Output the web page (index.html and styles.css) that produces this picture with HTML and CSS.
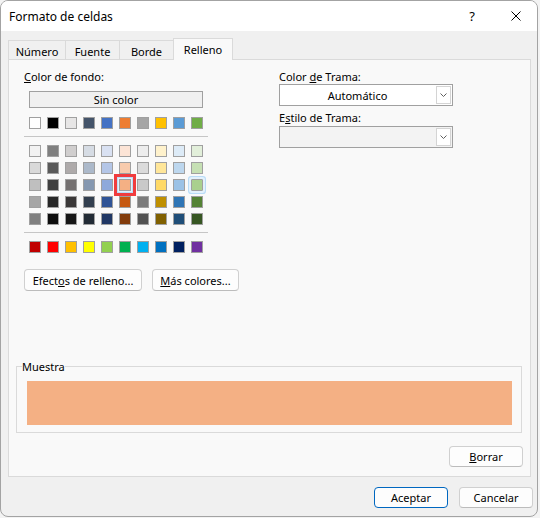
FILE: index.html
```html
<!DOCTYPE html>
<html lang="es">
<head>
    <meta charset="UTF-8">
    <title>Formato de celdas</title>
    <link rel="stylesheet" href="styles.css">
</head>
<body>
    <div class="window">
        <!-- Barra de título -->
        <div class="titlebar">
            <span class="title">Formato de celdas</span>
            <span class="help">?</span>
            <svg class="close" width="10" height="10" viewBox="0 0 10 10">
                <path d="M0.5 0.5 L9.5 9.5 M9.5 0.5 L0.5 9.5" stroke="#000" stroke-width="1"/>
            </svg>
        </div>

        <!-- Pestañas -->
        <div class="tabs">
            <div class="tab tab-numero">Número</div>
            <div class="tab tab-fuente">Fuente</div>
            <div class="tab tab-borde">Borde</div>
            <div class="tab tab-relleno active">Relleno</div>
        </div>

        <div class="panel">
            <div class="fill-top">
                <!-- Color de fondo -->
                <div class="bg-col">
                    <div class="label"><u>C</u>olor de fondo:</div>
                    <button class="no-color">Sin color</button>

                    <div class="swatches theme-row">
                        <span class="swatch" style="background:#FFFFFF"></span>
                        <span class="swatch" style="background:#000000"></span>
                        <span class="swatch" style="background:#E7E6E6"></span>
                        <span class="swatch" style="background:#44546A"></span>
                        <span class="swatch" style="background:#4472C4"></span>
                        <span class="swatch" style="background:#ED7D31"></span>
                        <span class="swatch" style="background:#A5A5A5"></span>
                        <span class="swatch" style="background:#FFC000"></span>
                        <span class="swatch" style="background:#5B9BD5"></span>
                        <span class="swatch" style="background:#70AD47"></span>
                    </div>

                    <div class="separator"></div>

                    <div class="swatches tints">
                        <span class="swatch" style="background:#F2F2F2"></span>
                        <span class="swatch" style="background:#7F7F7F"></span>
                        <span class="swatch" style="background:#D0CECE"></span>
                        <span class="swatch" style="background:#D6DCE4"></span>
                        <span class="swatch" style="background:#D9E1F2"></span>
                        <span class="swatch" style="background:#FCE4D6"></span>
                        <span class="swatch" style="background:#EDEDED"></span>
                        <span class="swatch" style="background:#FFF2CC"></span>
                        <span class="swatch" style="background:#DDEBF7"></span>
                        <span class="swatch" style="background:#E2EFDA"></span>

                        <span class="swatch" style="background:#D9D9D9"></span>
                        <span class="swatch" style="background:#595959"></span>
                        <span class="swatch" style="background:#AEAAAA"></span>
                        <span class="swatch" style="background:#ACB9CA"></span>
                        <span class="swatch" style="background:#B4C6E7"></span>
                        <span class="swatch" style="background:#F8CBAD"></span>
                        <span class="swatch" style="background:#DBDBDB"></span>
                        <span class="swatch" style="background:#FFE699"></span>
                        <span class="swatch" style="background:#BDD7EE"></span>
                        <span class="swatch" style="background:#C6E0B4"></span>

                        <span class="swatch" style="background:#BFBFBF"></span>
                        <span class="swatch" style="background:#404040"></span>
                        <span class="swatch" style="background:#757171"></span>
                        <span class="swatch" style="background:#8497B0"></span>
                        <span class="swatch" style="background:#8EA9DB"></span>
                        <span class="swatch selected" style="background:#F4B084"></span>
                        <span class="swatch" style="background:#C9C9C9"></span>
                        <span class="swatch" style="background:#FFD966"></span>
                        <span class="swatch" style="background:#9BC2E6"></span>
                        <span class="swatch hover" style="background:#A9D08E"></span>

                        <span class="swatch" style="background:#A6A6A6"></span>
                        <span class="swatch" style="background:#262626"></span>
                        <span class="swatch" style="background:#3A3838"></span>
                        <span class="swatch" style="background:#333F4F"></span>
                        <span class="swatch" style="background:#305496"></span>
                        <span class="swatch" style="background:#C65911"></span>
                        <span class="swatch" style="background:#7B7B7B"></span>
                        <span class="swatch" style="background:#BF8F00"></span>
                        <span class="swatch" style="background:#2F75B5"></span>
                        <span class="swatch" style="background:#548235"></span>

                        <span class="swatch" style="background:#808080"></span>
                        <span class="swatch" style="background:#0D0D0D"></span>
                        <span class="swatch" style="background:#161616"></span>
                        <span class="swatch" style="background:#222B35"></span>
                        <span class="swatch" style="background:#203764"></span>
                        <span class="swatch" style="background:#833C0C"></span>
                        <span class="swatch" style="background:#525252"></span>
                        <span class="swatch" style="background:#806000"></span>
                        <span class="swatch" style="background:#1F4E78"></span>
                        <span class="swatch" style="background:#375623"></span>
                    </div>

                    <div class="separator"></div>

                    <div class="swatches standard-row">
                        <span class="swatch" style="background:#C00000"></span>
                        <span class="swatch" style="background:#FF0000"></span>
                        <span class="swatch" style="background:#FFC000"></span>
                        <span class="swatch" style="background:#FFFF00"></span>
                        <span class="swatch" style="background:#92D050"></span>
                        <span class="swatch" style="background:#00B050"></span>
                        <span class="swatch" style="background:#00B0F0"></span>
                        <span class="swatch" style="background:#0070C0"></span>
                        <span class="swatch" style="background:#002060"></span>
                        <span class="swatch" style="background:#7030A0"></span>
                    </div>

                    <div class="effect-buttons">
                        <button class="btn btn-effects">Efect<u>o</u>s de relleno...</button>
                        <button class="btn btn-more">
                            <span><u>M</u>ás colores...</span>
                        </button>
                    </div>
                </div>

                <!-- Trama -->
                <div class="pattern-col">
                    <div class="label">Color <u>d</u>e Trama:</div>
                    <div class="combo">
                        <span class="combo-value">Automático</span>
                        <span class="combo-btn">
                            <svg width="7" height="4" viewBox="0 0 7 4">
                                <path d="M0.5 0.5 L3.5 3.5 L6.5 0.5" fill="none" stroke="#5f5f5f" stroke-width="1"/>
                            </svg>
                        </span>
                    </div>
                    <div class="label label-style">E<u>s</u>tilo de Trama:</div>
                    <div class="combo combo-empty">
                        <span class="combo-value"></span>
                        <span class="combo-btn">
                            <svg width="7" height="4" viewBox="0 0 7 4">
                                <path d="M0.5 0.5 L3.5 3.5 L6.5 0.5" fill="none" stroke="#5f5f5f" stroke-width="1"/>
                            </svg>
                        </span>
                    </div>
                </div>
            </div>

            <!-- Muestra -->
            <fieldset class="sample-group">
                <legend>Muestra</legend>
                <div class="sample"></div>
            </fieldset>

            <button class="btn btn-clear"><span><u>B</u>orrar</span></button>
        </div>

        <div class="footer">
            <button class="btn btn-ok">Aceptar</button>
            <button class="btn btn-cancel">Cancelar</button>
        </div>
    </div>
</body>
</html>
```

FILE: styles.css
```css
body {
    margin: 0;
    background-color: #f3f3f3;
    font-family: "Noto Sans", "Open Sans", sans-serif;
    font-size: 11px;
    color: #000;
}

.window {
    width: 538px;
    height: 517px;
    box-sizing: border-box;
    border: 1px solid #a3a3a3;
    border-radius: 8px;
    overflow: hidden;
    background-color: #f0f0f0;
    display: flex;
    flex-direction: column;
}

/* Barra de título */
.titlebar {
    height: 30px;
    flex-shrink: 0;
    background-color: #fff;
    display: flex;
    align-items: center;
    padding-left: 8px;
}

.title {
    flex: 1;
    font-size: 12px;
}

.help {
    width: 12px;
    text-align: center;
    font-size: 13px;
    margin-right: 33px;
}

.close {
    margin-right: 16px;
}

/* Pestañas */
.tabs {
    display: flex;
    align-items: flex-end;
    height: 21px;
    margin: 7px 0 0 7px;
    position: relative;
    z-index: 1;
}

.tab {
    height: 19px;
    box-sizing: border-box;
    border: 1px solid #dadada;
    border-bottom: none;
    margin-right: -1px;
    padding-top: 2px;
    display: flex;
    align-items: center;
    justify-content: center;
    background-color: #f0f0f0;
}

.tab-numero { width: 58px; }
.tab-fuente { width: 55px; }
.tab-borde { width: 55px; }
.tab-relleno { width: 60px; }

.tab.active {
    height: 22px;
    margin-bottom: -1px;
    padding-top: 0;
    background-color: #f9f9f9;
}

/* Panel de la pestaña */
.panel {
    height: 418px;
    box-sizing: border-box;
    margin: 0 6px 0 7px;
    border: 1px solid #dadada;
    background-color: #f9f9f9;
    padding: 9px 7px 0 15px;
    display: flex;
    flex-direction: column;
}

.fill-top {
    display: flex;
}

.bg-col {
    width: 255px;
}

.pattern-col {
    width: 174px;
}

.label {
    line-height: 15px;
}

.label-style {
    margin-top: 4px;
}

.no-color {
    display: block;
    width: 174px;
    height: 17px;
    margin: 7px 0 0 5px;
    padding: 0;
    box-sizing: border-box;
    border: 1px solid #a0a0a0;
    background-color: #f0f0f0;
    font: inherit;
    line-height: 15px;
    color: #000;
}

/* Paleta de colores */
.swatches {
    display: grid;
    grid-template-columns: repeat(10, 12px);
    column-gap: 6px;
    row-gap: 5px;
    margin-left: 5px;
}

.theme-row {
    margin-top: 9px;
}

.tints {
    margin-top: 8px;
}

.standard-row {
    margin-top: 8px;
}

.swatch {
    width: 12px;
    height: 12px;
    box-sizing: border-box;
    border: 1px solid #a0a0a0;
}

.swatch.selected {
    box-shadow: 0 0 0 1px #e3f1fc, 0 0 0 2px #b9dcf7, 0 0 0 5px #f03c3e;
}

.swatch.hover {
    border-radius: 1px;
    box-shadow: 0 0 0 2px #e3f1fc, 0 0 0 3px #b9dcf7;
}

.separator {
    width: 184px;
    height: 1px;
    margin-top: 7px;
    background-color: #c6c6c6;
}

/* Botones */
.btn {
    height: 22px;
    box-sizing: border-box;
    padding: 0;
    border: 1px solid #d0d0d0;
    border-bottom-color: #bcbcbc;
    border-radius: 4px;
    background-color: #fdfdfd;
    font: inherit;
    color: #000;
    display: flex;
    align-items: center;
    justify-content: center;
}

.effect-buttons {
    display: flex;
    gap: 10px;
    margin-top: 16px;
}

.btn-effects {
    width: 118px;
}

.btn-more {
    width: 87px;
}

/* Listas desplegables */
.combo {
    height: 22px;
    box-sizing: border-box;
    border: 1px solid #a0a0a0;
    background-color: #fff;
    display: flex;
}

.combo-empty {
    margin-top: 1px;
    background-color: #f3f3f3;
}

.combo-value {
    flex: 1;
    display: flex;
    align-items: center;
    justify-content: center;
}

.combo-btn {
    width: 15px;
    margin: 1px;
    box-sizing: border-box;
    border: 1px solid #d4d4d4;
    background-color: #fff;
    display: flex;
    align-items: center;
    justify-content: center;
}

/* Muestra */
.sample-group {
    margin: 68px 1px 0 -8px;
    padding: 0 9px 7px 10px;
    border: 1px solid #dadada;
}

.sample-group legend {
    padding: 0;
    margin-left: -5px;
    line-height: 15px;
}

.sample {
    height: 44px;
    margin-top: 7px;
    background-color: #F4B084;
}

.btn-clear {
    align-self: flex-end;
    width: 74px;
    height: 21px;
    margin-top: 13px;
}

/* Pie del diálogo */
.footer {
    display: flex;
    justify-content: flex-end;
    gap: 11px;
    padding: 10px 4px 0 0;
}

.btn-ok,
.btn-cancel {
    width: 74px;
    height: 21px;
}

.btn-ok {
    border-color: #0067c0;
}
```
